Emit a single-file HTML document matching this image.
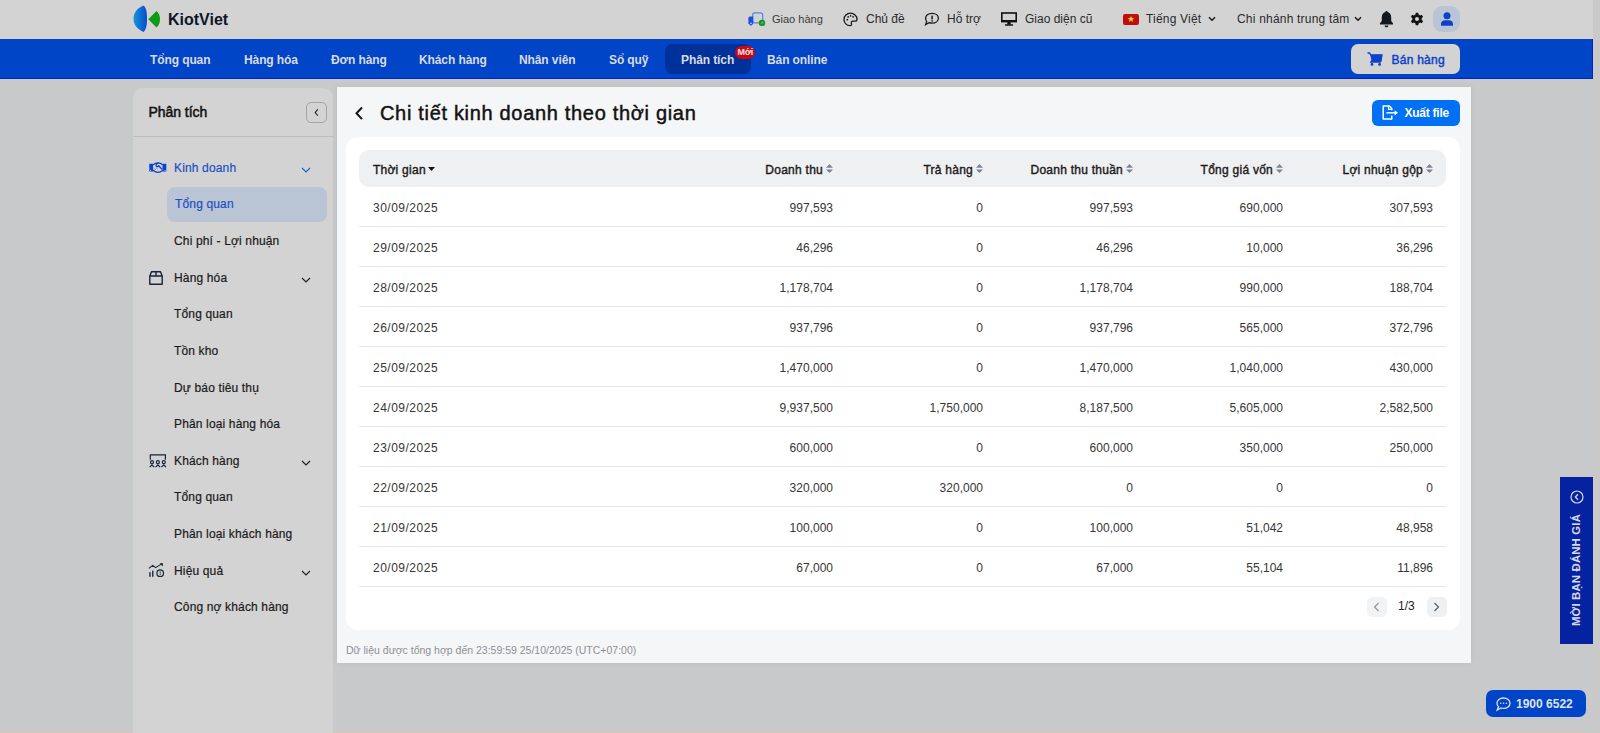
<!DOCTYPE html>
<html><head><meta charset="utf-8">
<style>
*{box-sizing:border-box;margin:0;padding:0}
html,body{width:1600px;height:733px;overflow:hidden}
body{background:#c8c9cb;font-family:"Liberation Sans",sans-serif;position:relative;color:#1a1a1a}
.abs{position:absolute}
svg{position:absolute;display:block;overflow:visible}
#scroll{left:1593px;top:0;width:7px;height:733px;background:#c9c9c9}
#hdr{left:0;top:0;width:1593px;height:39px;background:#d3d3d3}
#nav{left:0;top:39px;width:1593px;height:40px;background:#0044c8;border-bottom:1px solid #0622c2;border-right:1px solid #0622c2}
.t{position:absolute;white-space:nowrap;line-height:1}
.navi{color:#d9dbe2;font-weight:bold;font-size:12px;top:54px;letter-spacing:-0.1px}
.hi{color:#2a2a2a;font-size:12px;top:14px}
#side{left:133px;top:88px;width:200px;height:645px;background:#d3d3d3;border-radius:10px 10px 0 0}
#panel{left:337px;top:87px;width:1134px;height:576px;background:#f5f6f8;box-shadow:0 0 6px rgba(0,0,0,0.07)}
#card{left:346px;top:137px;width:1114px;height:493px;background:#fff;border-radius:12px}
#thead{left:359px;top:150px;width:1087px;height:37px;background:#eff0f2;border-radius:10px}
.row{position:absolute;left:359px;width:1087px;height:40px;border-bottom:1px solid #e6e7ea}
.cell{position:absolute;top:15px;font-size:12px;color:#363636;line-height:1;white-space:nowrap}
.hc{position:absolute;top:163.5px;font-size:12px;color:#1b1b1b;letter-spacing:0.25px;-webkit-text-stroke:0.4px #1b1b1b;line-height:1;white-space:nowrap}
.si{font-size:12px;color:#1b1b1b;letter-spacing:0.15px;-webkit-text-stroke:0.2px currentColor}
.chev{width:10px;height:6px}
</style></head>
<body>
<div id="scroll" class="abs"></div>
<div id="hdr" class="abs"></div>
<div id="nav" class="abs"></div>
<div class="abs" style="left:0;top:732px;width:1593px;height:1px;background:#d0c8bb"></div>
<div id="side" class="abs"></div>
<div class="abs" style="left:133px;top:136px;width:200px;height:1px;background:#bdbdbd"></div>
<div id="panel" class="abs"></div>
<div id="card" class="abs"></div>
<div id="thead" class="abs"></div>

<!-- logo -->
<svg style="left:133px;top:5px" width="30" height="28" viewBox="0 0 30 28">
<defs><linearGradient id="lg" x1="0" x2="1" y1="0" y2="0"><stop offset="0" stop-color="#1495d6"/><stop offset="1" stop-color="#0a4ccc"/></linearGradient></defs>
<path d="M10.5,0.6 C3.5,3.5 0.5,8.5 0.5,13.8 C0.5,19 3.5,24 10.5,27 C13.5,24.5 14,19 14,13.8 C14,8.5 13.5,3 10.5,0.6 Z" fill="url(#lg)"/>
<path d="M15.3,14.3 L23.5,5.9 C26,8 27,11 27,14.3 C27,17.5 26,20.5 23.5,22.4 Z" fill="#0c9a17"/>
</svg>
<div class="t" style="left:168px;top:12px;font-size:16px;font-weight:bold;color:#0f1626">KiotViet</div>

<!-- header right -->
<svg style="left:748px;top:12px" width="18" height="15" viewBox="0 0 18 15">
<rect x="4.7" y="0.9" width="10" height="10" rx="2" fill="none" stroke="#5c80e4" stroke-width="1.2"/>
<path d="M0.4,6.2 C0.4,5.3 1.2,4.6 2.2,4.6 L5.2,4.6 L5.2,11.4 L3.6,13.4 L2.4,13.4 L0.4,11.6 Z" fill="#1d4ee0"/>
<circle cx="3" cy="11.4" r="0.8" fill="#c9d3f0"/>
<circle cx="14" cy="10.9" r="3.2" fill="#109a20"/>
<path d="M12.4,11.6 L15.2,9.6 L15.2,11.2 Z" fill="#90c890"/>
</svg>
<div class="t hi" style="left:772px;top:14px;font-size:11px;color:#3a3a3a">Giao hàng</div>
<svg style="left:843px;top:12px" width="15" height="15" viewBox="0 0 15 15">
<path d="M7.5,1.2 C3.8,1.2 1,4 1,7.4 C1,11 3.8,13.6 7,13.6 C8.6,13.6 8.8,12.6 8.4,11.6 C8,10.6 8.5,9.2 9.8,9.2 L12,9.2 C13.2,9.2 14,8.3 14,7 C14,3.8 11,1.2 7.5,1.2 Z" fill="none" stroke="#1a1a1a" stroke-width="1.3"/>
<circle cx="4.3" cy="7.7" r="0.9" fill="#1a1a1a"/><circle cx="5.2" cy="4.8" r="0.9" fill="#1a1a1a"/><circle cx="7.6" cy="3.8" r="0.9" fill="#1a1a1a"/><circle cx="10.1" cy="4.8" r="0.9" fill="#1a1a1a"/>
</svg>
<div class="t hi" style="left:866px;top:13px">Chủ đề</div>
<svg style="left:924px;top:12px" width="16" height="14" viewBox="0 0 16 14">
<path d="M8,1.3 C11.8,1.3 14.4,3.5 14.4,6.3 C14.4,9.1 11.8,11.2 8,11.2 C6.9,11.2 5.9,11 5,10.7 L1.6,12.6 L2.7,9.6 C1.9,8.7 1.6,7.5 1.6,6.3 C1.6,3.5 4.2,1.3 8,1.3 Z" fill="none" stroke="#1a1a1a" stroke-width="1.3"/>
<rect x="7.3" y="3.6" width="1.5" height="3.8" fill="#1a1a1a"/><rect x="7.3" y="8.2" width="1.5" height="1.4" fill="#1a1a1a"/>
</svg>
<div class="t hi" style="left:947px;top:13px">Hỗ trợ</div>
<svg style="left:1001px;top:12px" width="16" height="14" viewBox="0 0 16 14">
<rect x="0.8" y="1" width="14.4" height="8.6" fill="none" stroke="#111" stroke-width="1.6"/>
<rect x="0" y="8" width="16" height="2" fill="#111"/>
<path d="M6.6,10 L9.4,10 L10,12.4 L6,12.4 Z" fill="#111"/>
<rect x="3.8" y="12.3" width="8.4" height="1.5" rx="0.7" fill="#111"/>
</svg>
<div class="t hi" style="left:1025px;top:13px">Giao diện cũ</div>
<div class="abs" style="left:1123px;top:14px;width:16px;height:11px;background:#c00d0d;border-radius:2px"></div>
<svg style="left:1127px;top:15px" width="8" height="8" viewBox="0 0 10 10"><path d="M5,0.8 L6.1,3.8 L9.3,3.8 L6.7,5.7 L7.7,8.8 L5,6.9 L2.3,8.8 L3.3,5.7 L0.7,3.8 L3.9,3.8 Z" fill="#e6d22a"/></svg>
<div class="t hi" style="left:1146px;top:13px;letter-spacing:0.2px">Tiếng Việt</div>
<svg class="chev" style="left:1207px;top:16px" viewBox="0 0 10 6"><path d="M2,1.2 L5,4.2 L8,1.2" fill="none" stroke="#1a1a1a" stroke-width="1.5"/></svg>
<div class="t hi" style="left:1237px;top:13px;letter-spacing:0.2px">Chi nhánh trung tâm</div>
<svg class="chev" style="left:1353px;top:16px" viewBox="0 0 10 6"><path d="M2,1.2 L5,4.2 L8,1.2" fill="none" stroke="#1a1a1a" stroke-width="1.5"/></svg>
<svg style="left:1379px;top:10px" width="15" height="18" viewBox="0 0 15 18">
<path d="M7.5,1 C8.2,1 8.6,1.5 8.6,2.1 C11,2.7 12.2,4.8 12.2,7.2 L12.2,11 L14,13.3 L14,14.4 L1,14.4 L1,13.3 L2.8,11 L2.8,7.2 C2.8,4.8 4,2.7 6.4,2.1 C6.4,1.5 6.8,1 7.5,1 Z" fill="#121820"/>
<path d="M5.6,15.4 L9.4,15.4 C9.4,16.5 8.6,17.2 7.5,17.2 C6.4,17.2 5.6,16.5 5.6,15.4 Z" fill="#121820"/>
</svg>
<svg style="left:1410px;top:12px" width="14" height="14" viewBox="0 0 14 14">
<path d="M5.8,0.8 L8.2,0.8 L8.6,2.6 L10.1,3.4 L11.9,2.8 L13.1,4.9 L11.7,6.1 L11.7,7.9 L13.1,9.1 L11.9,11.2 L10.1,10.6 L8.6,11.4 L8.2,13.2 L5.8,13.2 L5.4,11.4 L3.9,10.6 L2.1,11.2 L0.9,9.1 L2.3,7.9 L2.3,6.1 L0.9,4.9 L2.1,2.8 L3.9,3.4 L5.4,2.6 Z" fill="#121212"/>
<circle cx="7" cy="7" r="2" fill="#d3d3d3"/>
</svg>
<div class="abs" style="left:1433px;top:6px;width:27px;height:26px;background:#b9c5d5;border-radius:9px"></div>
<svg style="left:1441px;top:12px" width="12" height="14" viewBox="0 0 12 14">
<circle cx="6" cy="3.7" r="3.5" fill="#0b42cc"/>
<path d="M0,13.8 L0,11.8 C0,9.5 1.8,8.2 4,8.2 L8,8.2 C10.2,8.2 12,9.5 12,11.8 L12,13.8 Z" fill="#0b42cc"/>
</svg>

<!-- nav -->
<div class="abs" style="left:665px;top:44px;width:86px;height:30px;background:#003099;border-radius:7px"></div>
<div class="t navi" style="left:150px">Tổng quan</div>
<div class="t navi" style="left:244px">Hàng hóa</div>
<div class="t navi" style="left:331px">Đơn hàng</div>
<div class="t navi" style="left:419px">Khách hàng</div>
<div class="t navi" style="left:519px">Nhân viên</div>
<div class="t navi" style="left:609px">Sổ quỹ</div>
<div class="t navi" style="left:681px">Phân tích</div>
<div class="t navi" style="left:767px">Bán online</div>
<div class="abs" style="left:735px;top:46px;width:20px;height:13px;background:#d0060e;border-radius:7px"></div>
<div class="t" style="left:737.5px;top:47.5px;font-size:9px;font-weight:bold;color:#eee6e6;letter-spacing:-0.3px">Mới</div>
<div class="abs" style="left:1351px;top:44px;width:109px;height:30px;background:#d3d3d3;border-radius:7px"></div>
<svg style="left:1367px;top:52px" width="16" height="14" viewBox="0 0 16 14">
<path d="M0.5,1 L2.6,1 L3.6,2.8 L15,2.8 L14,9 L4.6,9 L3.8,10.2 L13.8,10.2" fill="none" stroke="#0b42cc" stroke-width="1.3"/>
<path d="M3.2,2.8 L15,2.8 L14,9 L4.6,9 Z" fill="#0b42cc"/>
<circle cx="5" cy="12.4" r="1.4" fill="#0b42cc"/><circle cx="12.6" cy="12.4" r="1.4" fill="#0b42cc"/>
</svg>
<div class="t" style="left:1391.5px;top:53.5px;font-size:12px;color:#0b42cc;-webkit-text-stroke:0.45px #0b42cc;letter-spacing:0.25px">Bán hàng</div>
<!-- sidebar -->
<div class="t" style="left:148.5px;top:104.5px;font-size:14px;color:#111;-webkit-text-stroke:0.5px #111;letter-spacing:-0.05px">Phân tích</div>
<div class="abs" style="left:306px;top:102px;width:21px;height:21px;border:1px solid #a0a3a9;border-radius:5px"></div>
<svg style="left:313px;top:108px" width="7" height="9" viewBox="0 0 7 9"><path d="M4.8,1.4 L2.2,4.5 L4.8,7.6" fill="none" stroke="#222" stroke-width="1.1"/></svg>

<svg style="left:149px;top:162px" width="18" height="11" viewBox="0 0 18 11">
<path d="M0.3,1.8 L3.9,1.8 L4.3,9.4 L0.3,9.4 Z M13.7,1.8 L17.3,1.8 L17.3,9.4 L13.3,9.4 Z" fill="#0b42cc"/>
<circle cx="1.6" cy="8.3" r="0.6" fill="#d3d3d3"/><circle cx="16" cy="8.3" r="0.6" fill="#d3d3d3"/>
<path d="M4,3 C5.6,1.4 7.4,0.8 9.2,0.8 C10.8,0.8 12.4,1.6 13.8,3 M4.2,8.2 C5.6,9.6 7.2,10.4 9,10.4 C10.8,10.4 12.4,9.6 13.6,8.4" fill="none" stroke="#0b42cc" stroke-width="1.3"/>
<path d="M9.6,1.2 C7.6,1.6 6.6,3 7.4,4.2 C8.2,5 9.2,4.6 9.8,3.8 L13,7.4" fill="none" stroke="#0b42cc" stroke-width="1.3"/>
<path d="M5.2,6.4 L7,8 M6.8,5.4 L8.8,7.2" fill="none" stroke="#6d8ee0" stroke-width="0.9"/>
</svg>
<div class="t si" style="left:174px;top:162px;color:#1d4fc4">Kinh doanh</div>
<svg class="chev" style="left:301px;top:167px" viewBox="0 0 10 6"><path d="M1,1 L5,5 L9,1" fill="none" stroke="#2a5ad0" stroke-width="1.1"/></svg>
<div class="abs" style="left:167px;top:187px;width:160px;height:35px;background:#b9c5d5;border-radius:8px"></div>
<div class="t si" style="left:175px;top:198px;color:#1d4fc4">Tổng quan</div>
<div class="t si" style="left:174px;top:235px">Chi phí - Lợi nhuận</div>

<svg style="left:149px;top:271px" width="14" height="14" viewBox="0 0 14 14">
<path d="M2.5,0.8 L11.5,0.8 L13.2,5 L13.2,13.2 L0.8,13.2 L0.8,5 Z M0.8,5 L13.2,5 M7,0.8 L7,5" fill="none" stroke="#18243a" stroke-width="1.4" stroke-linejoin="round"/>
</svg>
<div class="t si" style="left:174px;top:272px">Hàng hóa</div>
<svg class="chev" style="left:301px;top:277px" viewBox="0 0 10 6"><path d="M1,1 L5,5 L9,1" fill="none" stroke="#222" stroke-width="1.15"/></svg>
<div class="t si" style="left:174px;top:308px">Tổng quan</div>
<div class="t si" style="left:174px;top:345px">Tồn kho</div>
<div class="t si" style="left:174px;top:382px">Dự báo tiêu thụ</div>
<div class="t si" style="left:174px;top:418px">Phân loại hàng hóa</div>

<svg style="left:149px;top:454px" width="18" height="14" viewBox="0 0 18 14">
<path d="M1.3,5.8 L1.3,0.8 L16.4,0.8 L16.4,5.8" fill="none" stroke="#18243a" stroke-width="1.2"/>
<circle cx="3" cy="8.2" r="1.5" fill="none" stroke="#18243a" stroke-width="1.2"/>
<circle cx="8.9" cy="8.2" r="1.5" fill="none" stroke="#18243a" stroke-width="1.2"/>
<circle cx="14.8" cy="8.2" r="1.5" fill="none" stroke="#18243a" stroke-width="1.2"/>
<path d="M0.6,13.2 L3,10.8 L5.2,13.2 M6.5,13.2 L8.9,10.8 L11.1,13.2 M12.4,13.2 L14.8,10.8 L17,13.2" fill="none" stroke="#18243a" stroke-width="1.2"/>
</svg>
<div class="t si" style="left:174px;top:455px">Khách hàng</div>
<svg class="chev" style="left:301px;top:460px" viewBox="0 0 10 6"><path d="M1,1 L5,5 L9,1" fill="none" stroke="#222" stroke-width="1.15"/></svg>
<div class="t si" style="left:174px;top:491px">Tổng quan</div>
<div class="t si" style="left:174px;top:528px">Phân loại khách hàng</div>

<svg style="left:148px;top:563px" width="17" height="15" viewBox="0 0 17 15">
<path d="M0.8,5.4 L4.8,2.4 L7.6,4.6 L13.6,0.9" fill="none" stroke="#18243a" stroke-width="1.1"/>
<path d="M11.6,0.2 L15,0.2 L14.6,3.4 Z" fill="#18243a"/>
<rect x="1.2" y="9.2" width="1.5" height="4.6" fill="#26324a"/><rect x="4" y="7.6" width="1.5" height="6.2" fill="#26324a"/>
<circle cx="12.2" cy="10.2" r="3.3" fill="none" stroke="#18243a" stroke-width="1.2"/>
<path d="M12.2,8.2 L12.2,12.2" stroke="#556" stroke-width="1"/>
</svg>
<div class="t si" style="left:174px;top:565px">Hiệu quả</div>
<svg class="chev" style="left:301px;top:570px" viewBox="0 0 10 6"><path d="M1,1 L5,5 L9,1" fill="none" stroke="#222" stroke-width="1.15"/></svg>
<div class="t si" style="left:174px;top:601px">Công nợ khách hàng</div>

<!-- main title -->
<svg style="left:354px;top:106px" width="10" height="15" viewBox="0 0 10 15"><path d="M8,1.5 L2.5,7.3 L8,13.1" fill="none" stroke="#151515" stroke-width="2"/></svg>
<div class="t" style="left:380px;top:103px;font-size:20px;color:#111;letter-spacing:0.68px;-webkit-text-stroke:0.45px #111">Chi tiết kinh doanh theo thời gian</div>
<div class="abs" style="left:1372px;top:100px;width:88px;height:26px;background:#0070f4;border-radius:6px"></div>
<svg style="left:1382px;top:105px" width="17" height="15" viewBox="0 0 17 15">
<path d="M9.8,5.2 L9.8,3.6 L7.4,1 L1.2,1 L1.2,14 L9.8,14 L9.8,10.4" fill="none" stroke="#fff" stroke-width="1.5" stroke-linejoin="round"/>
<path d="M6.6,1 L6.6,4.4 L9.8,4.4" fill="none" stroke="#fff" stroke-width="1.3"/>
<path d="M4.4,7.8 L13,7.8" stroke="#fff" stroke-width="1.5"/>
<path d="M12.6,5.2 L16,7.8 L12.6,10.4 Z" fill="#fff"/>
</svg>
<div class="t" style="left:1404.5px;top:107px;font-size:12px;font-weight:bold;color:#fff;letter-spacing:-0.25px">Xuất file</div>

<!-- table header -->
<div class="hc" style="left:373px">Thời gian</div>
<svg style="left:428px;top:167px" width="7" height="4" viewBox="0 0 7 4"><path d="M0,0 L7,0 L3.5,4 Z" fill="#111"/></svg>
<div class="hc" style="right:777px">Doanh thu</div>
<svg style="left:826px;top:164px" width="7" height="9" viewBox="0 0 7 9"><path d="M0,3.8 L3.5,0 L7,3.8 Z M0,5.6 L3.5,9 L7,5.6 Z" fill="#7d8491"/></svg>
<div class="hc" style="right:627px">Trả hàng</div>
<svg style="left:976px;top:164px" width="7" height="9" viewBox="0 0 7 9"><path d="M0,3.8 L3.5,0 L7,3.8 Z M0,5.6 L3.5,9 L7,5.6 Z" fill="#7d8491"/></svg>
<div class="hc" style="right:477px">Doanh thu thuần</div>
<svg style="left:1126px;top:164px" width="7" height="9" viewBox="0 0 7 9"><path d="M0,3.8 L3.5,0 L7,3.8 Z M0,5.6 L3.5,9 L7,5.6 Z" fill="#7d8491"/></svg>
<div class="hc" style="right:327px">Tổng giá vốn</div>
<svg style="left:1276px;top:164px" width="7" height="9" viewBox="0 0 7 9"><path d="M0,3.8 L3.5,0 L7,3.8 Z M0,5.6 L3.5,9 L7,5.6 Z" fill="#7d8491"/></svg>
<div class="hc" style="right:177px">Lợi nhuận gộp</div>
<svg style="left:1426px;top:164px" width="7" height="9" viewBox="0 0 7 9"><path d="M0,3.8 L3.5,0 L7,3.8 Z M0,5.6 L3.5,9 L7,5.6 Z" fill="#7d8491"/></svg><div class="row" style="top:187px">
<div class="cell" style="left:14px;letter-spacing:0.5px">30/09/2025</div>
<div class="cell num" style="right:613px">997,593</div>
<div class="cell num" style="right:463px">0</div>
<div class="cell num" style="right:313px">997,593</div>
<div class="cell num" style="right:163px">690,000</div>
<div class="cell num" style="right:13px">307,593</div>
</div>
<div class="row" style="top:227px">
<div class="cell" style="left:14px;letter-spacing:0.5px">29/09/2025</div>
<div class="cell num" style="right:613px">46,296</div>
<div class="cell num" style="right:463px">0</div>
<div class="cell num" style="right:313px">46,296</div>
<div class="cell num" style="right:163px">10,000</div>
<div class="cell num" style="right:13px">36,296</div>
</div>
<div class="row" style="top:267px">
<div class="cell" style="left:14px;letter-spacing:0.5px">28/09/2025</div>
<div class="cell num" style="right:613px">1,178,704</div>
<div class="cell num" style="right:463px">0</div>
<div class="cell num" style="right:313px">1,178,704</div>
<div class="cell num" style="right:163px">990,000</div>
<div class="cell num" style="right:13px">188,704</div>
</div>
<div class="row" style="top:307px">
<div class="cell" style="left:14px;letter-spacing:0.5px">26/09/2025</div>
<div class="cell num" style="right:613px">937,796</div>
<div class="cell num" style="right:463px">0</div>
<div class="cell num" style="right:313px">937,796</div>
<div class="cell num" style="right:163px">565,000</div>
<div class="cell num" style="right:13px">372,796</div>
</div>
<div class="row" style="top:347px">
<div class="cell" style="left:14px;letter-spacing:0.5px">25/09/2025</div>
<div class="cell num" style="right:613px">1,470,000</div>
<div class="cell num" style="right:463px">0</div>
<div class="cell num" style="right:313px">1,470,000</div>
<div class="cell num" style="right:163px">1,040,000</div>
<div class="cell num" style="right:13px">430,000</div>
</div>
<div class="row" style="top:387px">
<div class="cell" style="left:14px;letter-spacing:0.5px">24/09/2025</div>
<div class="cell num" style="right:613px">9,937,500</div>
<div class="cell num" style="right:463px">1,750,000</div>
<div class="cell num" style="right:313px">8,187,500</div>
<div class="cell num" style="right:163px">5,605,000</div>
<div class="cell num" style="right:13px">2,582,500</div>
</div>
<div class="row" style="top:427px">
<div class="cell" style="left:14px;letter-spacing:0.5px">23/09/2025</div>
<div class="cell num" style="right:613px">600,000</div>
<div class="cell num" style="right:463px">0</div>
<div class="cell num" style="right:313px">600,000</div>
<div class="cell num" style="right:163px">350,000</div>
<div class="cell num" style="right:13px">250,000</div>
</div>
<div class="row" style="top:467px">
<div class="cell" style="left:14px;letter-spacing:0.5px">22/09/2025</div>
<div class="cell num" style="right:613px">320,000</div>
<div class="cell num" style="right:463px">320,000</div>
<div class="cell num" style="right:313px">0</div>
<div class="cell num" style="right:163px">0</div>
<div class="cell num" style="right:13px">0</div>
</div>
<div class="row" style="top:507px">
<div class="cell" style="left:14px;letter-spacing:0.5px">21/09/2025</div>
<div class="cell num" style="right:613px">100,000</div>
<div class="cell num" style="right:463px">0</div>
<div class="cell num" style="right:313px">100,000</div>
<div class="cell num" style="right:163px">51,042</div>
<div class="cell num" style="right:13px">48,958</div>
</div>
<div class="row" style="top:547px">
<div class="cell" style="left:14px;letter-spacing:0.5px">20/09/2025</div>
<div class="cell num" style="right:613px">67,000</div>
<div class="cell num" style="right:463px">0</div>
<div class="cell num" style="right:313px">67,000</div>
<div class="cell num" style="right:163px">55,104</div>
<div class="cell num" style="right:13px">11,896</div>
</div>
<!-- pagination -->
<div class="abs" style="left:1367px;top:597px;width:20px;height:20px;background:#f2f3f5;border-radius:5px"></div>
<svg style="left:1373px;top:602px" width="7" height="10" viewBox="0 0 7 10"><path d="M5.5,1 L1.5,5 L5.5,9" fill="none" stroke="#8c929c" stroke-width="1.1"/></svg>
<div class="t" style="left:1398px;top:600px;font-size:12px;color:#222">1/3</div>
<div class="abs" style="left:1427px;top:597px;width:20px;height:20px;background:#eff0f2;border-radius:5px"></div>
<svg style="left:1433px;top:602px" width="7" height="10" viewBox="0 0 7 10"><path d="M1.5,1 L5.5,5 L1.5,9" fill="none" stroke="#555a63" stroke-width="1.1"/></svg>

<div class="t" style="left:346px;top:645px;font-size:10.5px;color:#8c9097">Dữ liệu được tổng hợp đến 23:59:59 25/10/2025 (UTC+07:00)</div>

<!-- feedback tab -->
<div class="abs" style="left:1560px;top:477px;width:33px;height:167px;background:#0522a0"></div>
<svg style="left:1570px;top:490px" width="14" height="14" viewBox="0 0 14 14"><circle cx="7" cy="7" r="6" fill="none" stroke="#d6d9e6" stroke-width="1.2"/><path d="M8,4.2 L5.4,7 L8,9.8" fill="none" stroke="#d6d9e6" stroke-width="1.3"/></svg>
<div class="t" style="left:1576.5px;top:569.5px;font-size:11.3px;font-weight:bold;color:#d6d9e6;letter-spacing:0.2px;transform:translate(-50%,-50%) rotate(-90deg)">MỜI BẠN ĐÁNH GIÁ</div>

<!-- phone -->
<div class="abs" style="left:1486px;top:690px;width:100px;height:27px;background:#0044c8;border-radius:7px"></div>
<svg style="left:1496px;top:697px" width="15" height="14" viewBox="0 0 15 14">
<path d="M7.5,1 C11.2,1 14,3.3 14,6.2 C14,9.1 11.2,11.4 7.5,11.4 C6.6,11.4 5.7,11.3 4.9,11 L1.2,13 L2.5,9.8 C1.5,8.8 1,7.6 1,6.2 C1,3.3 3.8,1 7.5,1 Z" fill="none" stroke="#dfe2ea" stroke-width="1.3"/>
<circle cx="4.6" cy="6.3" r="0.8" fill="#dfe2ea"/><circle cx="7.5" cy="6.3" r="0.8" fill="#dfe2ea"/><circle cx="10.4" cy="6.3" r="0.8" fill="#dfe2ea"/>
</svg>
<div class="t" style="left:1516px;top:698px;font-size:12px;font-weight:bold;color:#dfe2ea">1900 6522</div>
</body></html>
